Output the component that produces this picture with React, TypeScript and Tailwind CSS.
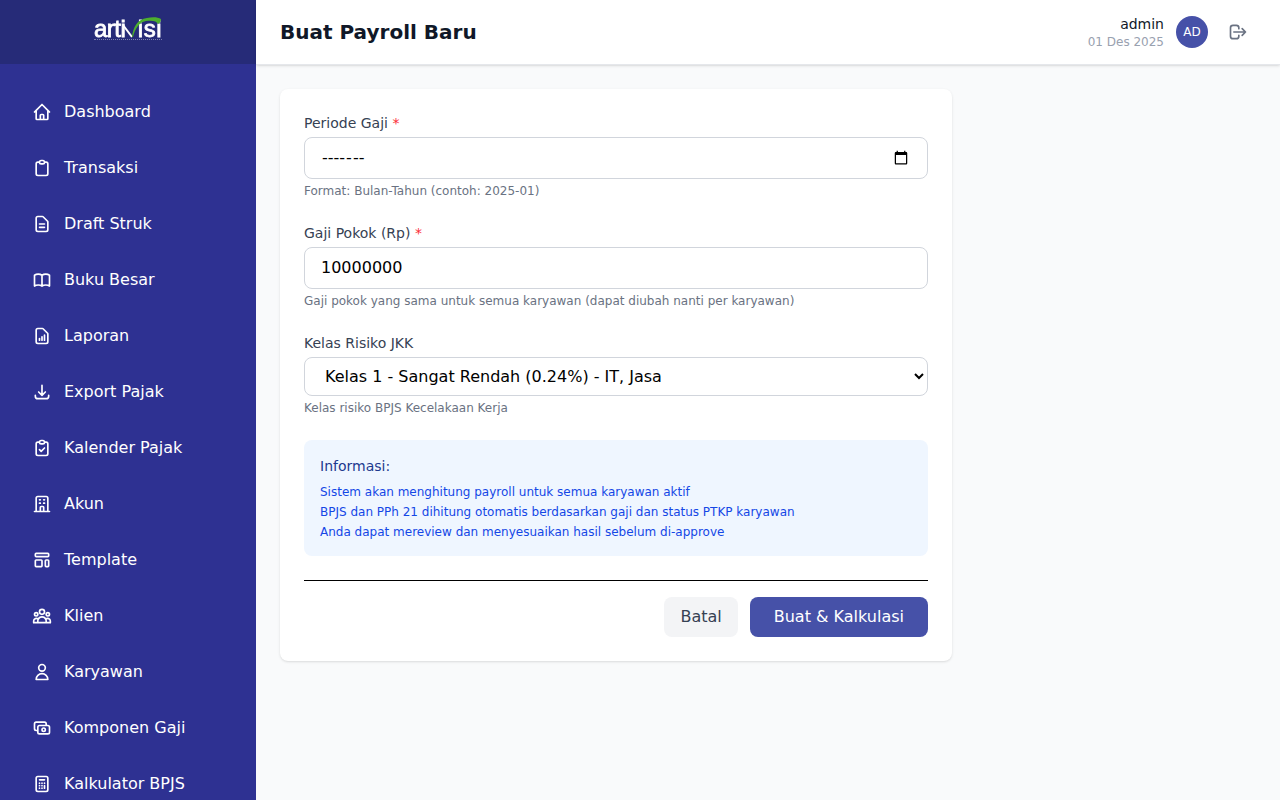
import React from "react";
import {
  HiOutlineHome,
  HiOutlineClipboard,
  HiOutlineDocumentText,
  HiOutlineBookOpen,
  HiOutlineDocumentReport,
  HiOutlineDownload,
  HiOutlineClipboardCheck,
  HiOutlineOfficeBuilding,
  HiOutlineTemplate,
  HiOutlineUserGroup,
  HiOutlineUser,
  HiOutlineCash,
  HiOutlineCalculator,
  HiOutlineLogout,
} from "react-icons/hi";

const menu = [
  { label: "Dashboard", icon: HiOutlineHome },
  { label: "Transaksi", icon: HiOutlineClipboard },
  { label: "Draft Struk", icon: HiOutlineDocumentText },
  { label: "Buku Besar", icon: HiOutlineBookOpen },
  { label: "Laporan", icon: HiOutlineDocumentReport },
  { label: "Export Pajak", icon: HiOutlineDownload },
  { label: "Kalender Pajak", icon: HiOutlineClipboardCheck },
  { label: "Akun", icon: HiOutlineOfficeBuilding },
  { label: "Template", icon: HiOutlineTemplate },
  { label: "Klien", icon: HiOutlineUserGroup },
  { label: "Karyawan", icon: HiOutlineUser },
  { label: "Komponen Gaji", icon: HiOutlineCash },
  { label: "Kalkulator BPJS", icon: HiOutlineCalculator },
];

const Logo = () => (
  <div className="relative h-6 w-[68px] font-['Liberation_Sans',sans-serif] text-[24px] leading-[26px] tracking-[-0.5px] text-white blur-[0.4px] [-webkit-text-stroke:0.8px_white]">
    <div className="flex justify-between">
      <span>arti</span>
      <span className="tracking-[0.5px]">isi</span>
    </div>
    <div className="absolute top-[23px] right-0 left-0 border-t border-dotted border-white/40" />
    <svg className="absolute top-0 left-0" width="68" height="24" viewBox="0 0 68 24" fill="none">
      <path d="M29 9 L38 21" stroke="#ffffff" strokeWidth="2" />
      <path
        d="M38 21 C39 12 43 3 53 2 C58 1 64 1 67 3 C67 5 66 7 64 8 C63 5 58 4 52 5 C45 6 41 13 39 21 Z"
        fill="#4cae2e"
      />
    </svg>
  </div>
);

const Label = ({ text, required }: { text: string; required?: boolean }) => (
  <label className="mb-1 block text-sm text-gray-700">
    {text} {required && <span className="text-red-500">*</span>}
  </label>
);

const App = () => {
  return (
    <div className="flex h-screen overflow-hidden bg-gray-50 font-['DejaVu_Sans',sans-serif]">
      <aside className="w-64 shrink-0 overflow-hidden bg-[#2e3192]">
        <div className="flex h-16 items-center justify-center bg-[#262b78] pb-[8px]">
          <Logo />
        </div>
        <nav className="flex flex-col pt-5">
          {menu.map((item) => (
            <a key={item.label} className="flex h-14 shrink-0 items-center gap-3 px-8 text-base text-white">
              <item.icon className="h-5 w-5 shrink-0 text-white" />
              <span>{item.label}</span>
            </a>
          ))}
        </nav>
      </aside>

      <div className="flex min-w-0 flex-1 flex-col">
        <header className="flex h-[65px] shrink-0 items-center justify-between border-b border-gray-200 bg-white pr-8 pl-6 shadow-sm">
          <h1 className="text-xl font-bold text-gray-900">Buat Payroll Baru</h1>
          <div className="flex items-center gap-3">
            <div className="text-right">
              <div className="text-sm leading-5 text-gray-900">admin</div>
              <div className="text-xs leading-4 text-gray-400">01 Des 2025</div>
            </div>
            <div className="flex h-8 w-8 items-center justify-center rounded-full bg-[#4651a8] text-xs text-white">
              AD
            </div>
            <HiOutlineLogout className="ml-2 h-5 w-5 text-gray-500" />
          </div>
        </header>

        <main className="flex-1 p-6">
          <div className="w-[672px] rounded-lg bg-white p-6 shadow">
            <div className="mb-6">
              <Label text="Periode Gaji" required />
              <input
                type="month"
                className="w-full rounded-lg border border-gray-300 bg-white px-4 py-2 text-base text-black"
              />
              <p className="mt-1 text-xs text-gray-500">Format: Bulan-Tahun (contoh: 2025-01)</p>
            </div>

            <div className="mb-6">
              <Label text="Gaji Pokok (Rp)" required />
              <input
                type="number"
                defaultValue="10000000"
                className="w-full rounded-lg border border-gray-300 bg-white px-4 py-2 text-base text-black"
              />
              <p className="mt-1 text-xs text-gray-500">
                Gaji pokok yang sama untuk semua karyawan (dapat diubah nanti per karyawan)
              </p>
            </div>

            <div className="mb-6">
              <Label text="Kelas Risiko JKK" />
              <select className="w-full rounded-lg border border-gray-300 bg-white px-4 py-2 text-base text-black">
                <option>Kelas 1 - Sangat Rendah (0.24%) - IT, Jasa</option>
              </select>
              <p className="mt-1 text-xs text-gray-500">Kelas risiko BPJS Kecelakaan Kerja</p>
            </div>

            <div className="mb-6 rounded-lg bg-blue-50 p-4">
              <h3 className="mb-2 text-sm text-blue-900">Informasi:</h3>
              <ul className="flex flex-col gap-1 text-xs text-blue-700">
                <li>Sistem akan menghitung payroll untuk semua karyawan aktif</li>
                <li>BPJS dan PPh 21 dihitung otomatis berdasarkan gaji dan status PTKP karyawan</li>
                <li>Anda dapat mereview dan menyesuaikan hasil sebelum di-approve</li>
              </ul>
            </div>

            <div className="flex justify-end gap-3 border-t border-black pt-4">
              <button className="h-10 rounded-lg bg-gray-100 px-4 text-base text-gray-700">Batal</button>
              <button className="h-10 rounded-lg bg-[#4651a8] px-6 text-base text-white">Buat &amp; Kalkulasi</button>
            </div>
          </div>
        </main>
      </div>
    </div>
  );
};

export default App;
